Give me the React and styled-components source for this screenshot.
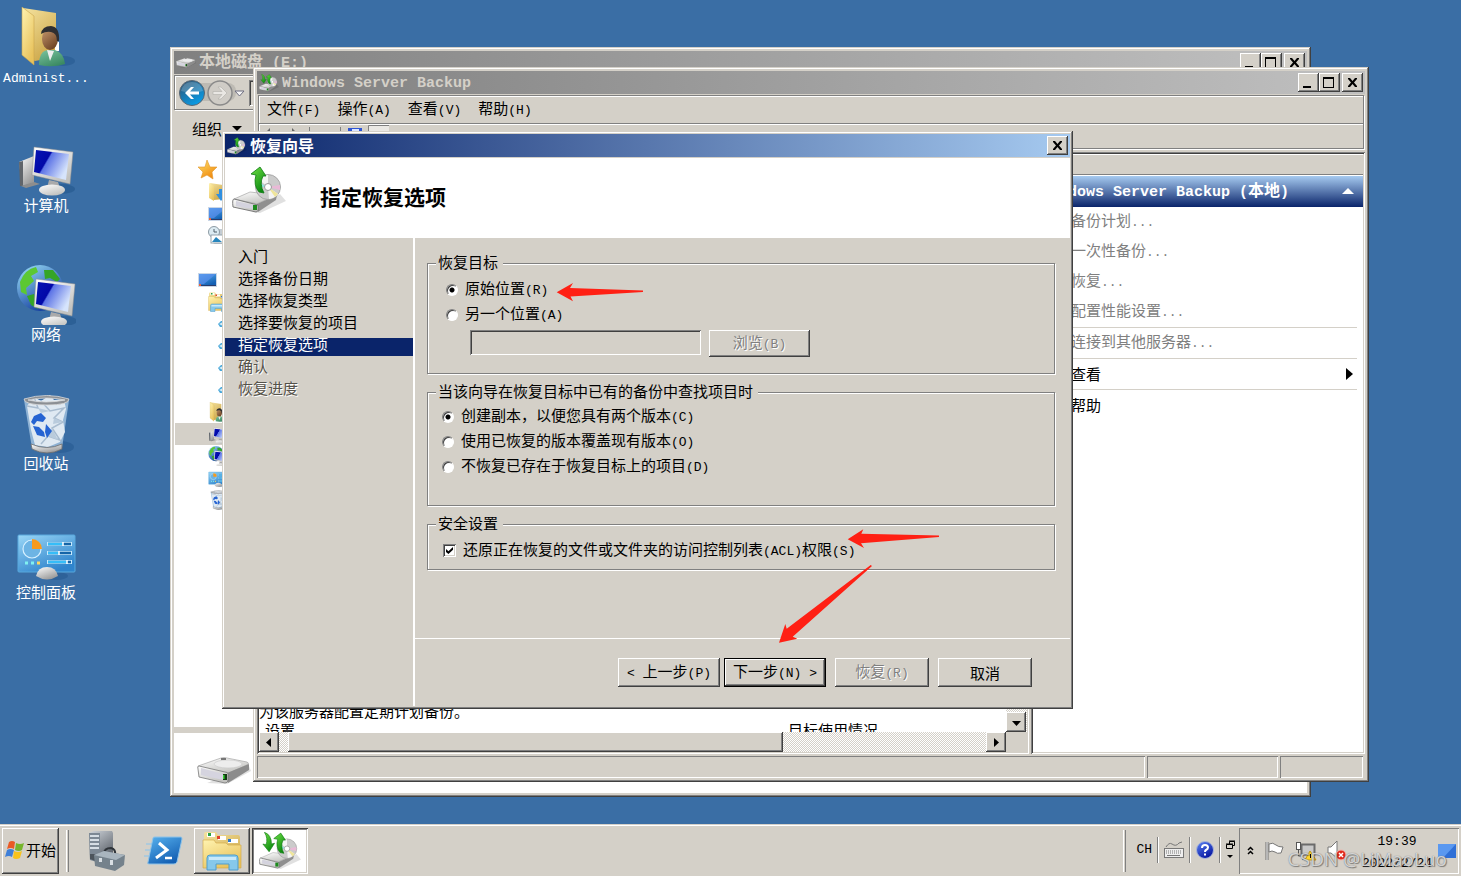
import React from "react";
import styled, { createGlobalStyle, css } from "styled-components";

const face = "#d4d0c8";
const navy = "#0a246a";
const sky = "#a6caf0";
const shade = "#808080";
const dark = "#404040";

const GlobalStyle = createGlobalStyle`
  * { box-sizing: border-box; }
  html, body, #root { height: 100%; }
  body { margin: 0; overflow: hidden; }
  body, button, input, a {
    font-family: "Noto Sans CJK SC", sans-serif;
    font-size: 15px;
    line-height: 18px;
    color: #000;
  }
  button { padding: 0; border: 0; background: none; white-space: nowrap; }
  svg { display: block; flex: none; }
`;

const raised = css`
  background: ${face};
  box-shadow: inset -1px -1px 0 ${dark}, inset 1px 1px 0 #fff, inset -2px -2px 0 ${shade};
`;
const sunken = css`
  padding: 2px;
  box-shadow: inset 1px 1px 0 ${shade}, inset -1px -1px 0 #fff, inset 2px 2px 0 ${dark}, inset -2px -2px 0 ${face};
`;
const etched = css`
  border: 1px solid ${shade};
  box-shadow: 1px 1px 0 #fff, inset 1px 1px 0 #fff;
`;
const dither = css`
  background: repeating-conic-gradient(#fff 0 25%, ${face} 0 50%) 0 0 / 2px 2px;
`;

/* ---------- text ---------- */

const Latin = styled.span`
  font-family: "Liberation Mono", monospace;
  font-size: ${(p) => (p.$large ? 15 : 13)}px;
  white-space: pre;
`;

function Mixed({ text, large }) {
  return text.split(/([\x20-\x7e]+)/).map((part, i) =>
    i % 2 ? <Latin key={i} $large={large}>{part}</Latin> : part
  );
}

/* ---------- drawings ---------- */

const DefsSvg = styled.svg`
  position: absolute;
`;

function Gradients() {
  const grads = {
    gFolder: ["#fff3b0", "#e8c25c"],
    gFolderDark: ["#f5e3a0", "#cda84a"],
    gMetal: ["#ffffff", "#9a9a9a"],
    gMetalDark: ["#cfd4da", "#5d636b"],
    gGreen: ["#6fe045", "#0c8a10"],
    gSky: ["#9ad7f7", "#2f84cc"],
    gBlue: ["#58b2ee", "#1460b4"],
    gOrb: ["#34506c", "#089be6"],
    gGlobe: ["#9fe4fb", "#103a9c"],
    gStar: ["#ffe36a", "#f08a10"],
    gSkin: ["#c89a70", "#6f4526"],
    gShirt: ["#7cc4a0", "#3b8a63"],
    gHelp: ["#5d86f5", "#0715a0"],
    gPale: ["#ffffff", "#c2c2bf"],
  };
  return (
    <DefsSvg width="0" height="0" aria-hidden="true">
      <defs>
        {Object.entries(grads).map(([id, [a, b]]) => (
          <linearGradient key={id} id={id} x1="0" y1="0" x2="0.6" y2="1">
            <stop offset="0" stopColor={a} />
            <stop offset="1" stopColor={b} />
          </linearGradient>
        ))}
        <linearGradient id="gScreen" x1="0" y1="0" x2="1" y2="0.5">
          <stop offset="0" stopColor="#0614b4" />
          <stop offset="0.42" stopColor="#0208a8" />
          <stop offset="0.46" stopColor="#5d74e6" />
          <stop offset="1" stopColor="#d6e4fc" />
        </linearGradient>
      </defs>
    </DefsSvg>
  );
}

const Draw = ({ w, h, box, children }) => (
  <svg width={w} height={h} viewBox={box} aria-hidden="true">{children}</svg>
);

const Monitor = () => (
  <g>
    <ellipse cx="45" cy="53" rx="14" ry="5" fill="#1d4f86" opacity="0.45" />
    <path d="M33 44 L42 46 L44 52 H31Z" fill="#aaa" />
    <ellipse cx="36" cy="54" rx="13" ry="5.500" fill="url(#gPale)" />
    <path d="M18 11 L57 16 L54 48 L16 39Z" fill="url(#gPale)" stroke="#8f8f8f" strokeWidth="0.500" />
    <path d="M20 14 L53 18 L50 44 L18 36Z" fill="url(#gScreen)" />
  </g>
);

const UserFolder = ({ s = 60 }) => (
  <Draw w={s} h={s} box="3 0 60 60">
    <ellipse cx="50" cy="54" rx="12" ry="5" fill="#1d4f86" opacity="0.4" />
    <path d="M10 1 L43 6 V50 L22 54 L10 48Z" fill="url(#gFolderDark)" />
    <path d="M42 34 L46 35 V44 L42 44Z" fill="#fff" />
    <path d="M9 0 L21 9 V58 L9 48Z" fill="url(#gFolder)" stroke="#c9a64e" strokeWidth="0.600" />
    <path d="M26 58 Q26 44 35 43 L42 43 Q51 46 52 57 Q40 61 26 58Z" fill="url(#gShirt)" />
    <path d="M34 43 L37 54 L41 44Z" fill="#eee" />
    <ellipse cx="37" cy="32" rx="8" ry="11" fill="url(#gSkin)" />
    <path d="M28 27 Q29 19 38 19 Q47 20 46 34 L44 34 Q44 26 38 25 Q33 24 28 27Z" fill="#2f2f31" />
  </Draw>
);

const Computer = ({ s = 60 }) => (
  <Draw w={s} h={s} box="0 0 60 60">
    <path d="M3 26 L18 20 V47 L6 50Z" fill="url(#gMetal)" />
    <path d="M3 26 L7 25 V50 L4 50Z" fill="#60656b" />
    <path d="M5 50 L18 46 L24 48 L10 52Z" fill="#8d8d8d" />
    <Monitor />
  </Draw>
);

const Network = ({ s = 60 }) => (
  <Draw w={s} h={s} box="0 0 60 60">
    <circle cx="24" cy="23" r="23" fill="url(#gGlobe)" />
    <path d="M4 17 Q9 4 20 2 L22 7 L15 11 L18 16 L10 23 L11 30 L5 27Z" fill="#5cc832" />
    <path d="M28 5 L37 5 L44 14 L41 17 L34 13 L29 14Z M11 31 L18 29 L22 44 L15 40Z" fill="#35a526" />
    <g transform="translate(2 3)"><Monitor /></g>
  </Draw>
);

const Bin = ({ s = 60 }) => (
  <Draw w={s} h={s} box="0 0 60 60">
    <ellipse cx="44" cy="53" rx="14" ry="6" fill="#1d4f86" opacity="0.4" />
    <path d="M8 6 H53 L46 54 Q31 62 16 54Z" fill="#9fc0dd" opacity="0.85" />
    <path d="M11 12 L18 3 L25 7 L34 1 L38 6 L48 5 L50 15 L47 26 L49 38 L44 48 L32 53 L19 51 L15 36Z" fill="#dfe9f2" />
    <path d="M18 3 L22 14 L11 12 M25 7 L34 17 L48 14 L38 24 L47 28 L36 34 L44 46 L32 42 L25 50" fill="none" stroke="#a9bccf" strokeWidth="1.500" />
    <path d="M22 14 L34 17 L25 19Z M38 24 L47 28 L37 30Z M36 34 L42 46 L32 42Z" fill="#b9cbdc" />
    <path d="M18 22 L25 19 L30 24 L27 28 L21 27 L18 31 L15 28Z M17 32 L21 41 L29 43 L28 38 L23 33Z M30 30 L36 37 L31 44 L29 38Z" fill="#2563d2" />
    <path d="M15 50 Q31 57 46 50 L46 55 Q31 63 16 55Z" fill="url(#gMetal)" stroke="#6c6c6c" strokeWidth="0.800" />
    <path d="M8 5 Q31 -2 53 5 Q53 11 31 11 Q8 11 8 5Z M12 6 Q30 10 49 6 Q31 2 12 6Z" fillRule="evenodd" fill="#8b8f94" stroke="#dcdcdc" strokeWidth="0.800" />
  </Draw>
);

const ControlPanel = ({ s = 60 }) => (
  <Draw w={s} h={s} box="0 0 60 60">
    <ellipse cx="40" cy="53" rx="12" ry="4" fill="#1d4f86" opacity="0.4" />
    <rect x="2" y="12" width="57" height="37" rx="1" fill="url(#gSky)" stroke="#58a8dc" />
    <circle cx="16" cy="26" r="9" fill="#6db4e4" stroke="#d6f0ff" strokeWidth="1.200" />
    <path d="M16 26 V16 A10 10 0 0 1 26 26Z" fill="#f79a1c" />
    <path d="M31 21 H56 M31 30 H56 M31 39 H56" stroke="#c8e9fb" strokeWidth="4" />
    <path d="M32 21 H55 M32 30 H55 M32 39 H55" stroke="#1565a8" strokeWidth="2.500" />
    <path d="M32 21 H47 M32 30 H43 M32 39 H51" stroke="#35bdf8" strokeWidth="2.500" />
    <path d="M47 19 v4 M43 28 v4 M51 37 v4" stroke="#fff" strokeWidth="1.500" />
    <path d="M9 40 h3 M15 40 h3" stroke="#80f0f0" strokeWidth="3" />
    <path d="M21 40 h3" stroke="#ffd75e" strokeWidth="3" />
    <path d="M20 53 Q22 44 31 44 Q40 44 42 53 Q31 60 20 53Z" fill="url(#gMetal)" />
  </Draw>
);

const Drive = ({ w, h }) => (
  <Draw w={w} h={h} box="0 0 54 28">
    <path d="M10 26 L30 27 L54 14 L52 9Z" fill="#000" opacity="0.12" />
    <path d="M1 9 L24 1 Q27 0 30 1 L50 5 Q53 6 50 8 L30 17 L2 12Z" fill="url(#gPale)" stroke="#9b9b9b" strokeWidth="0.600" />
    <ellipse cx="31" cy="7" rx="14" ry="4" fill="#ededed" stroke="#c8c8c8" strokeWidth="0.600" />
    <path d="M24 1 H29 V3 H24Z" fill="#777" />
    <path d="M30 16 L52 7 V13 L31 26Z" fill="#8c8c8c" />
    <path d="M2 9 Q0 9 1 12 L2 20 L28 26 Q31 26 31 23 L31 17 Q31 15 28 15Z" fill="url(#gPale)" stroke="#777" strokeWidth="0.800" />
    <path d="M4 11 L26 17 V23 L4 18Z" fill="#d5d4df" />
    <rect x="26" y="17" width="4" height="6" fill="#123d12" />
    <rect x="26" y="18" width="1.500" height="4" fill="#39d135" />
  </Draw>
);

const BackupIcon = ({ w, h, both }) => (
  <Draw w={w} h={h} box="0 0 54 48">
    <path d="M20 46 L28 47 L54 35 L48 28Z" fill="#000" opacity="0.12" />
    <path d="M2 33 L18 26 L44 29 L25 38Z" fill="url(#gPale)" stroke="#999" strokeWidth="0.600" />
    <path d="M25 38 L45 29 L44 34 L26 46Z" fill="#8f8f8f" />
    <path d="M2 33 Q0 33 1 41 L24 46 Q27 46 26 39Z" fill="url(#gPale)" stroke="#6f6f6f" strokeWidth="0.900" />
    <path d="M4 35 L21 39 V43 L4 40Z" fill="#d4d3de" />
    <rect x="21" y="39" width="4" height="5" fill="#1d8a1d" />
    <circle cx="36" cy="21" r="12.500" fill="#cbcbcb" stroke="#9a9a9a" strokeWidth="0.800" />
    <path d="M36 21 L26 13 A12 12 0 0 1 36 9Z M36 21 L46 28 A12 12 0 0 1 37 33Z" fill="#f4f4f4" />
    <path d="M36 21 L48 19 L48 24Z" fill="#e9b9d6" />
    <path d="M36 21 L46 28 L43 31Z" fill="#efe59a" />
    <path d="M36 21 L24 21 L26 16Z" fill="#96e0e0" />
    <circle cx="36" cy="21" r="3.500" fill="#fff" stroke="#9a9a9a" />
    <path d="M28 1 L34 10 L31 10 Q27 18 32 27 L27 26 Q21 19 24 9 L19 8Z" fill="url(#gGreen)" stroke="#0d7a12" strokeWidth="0.800" />
    {both && <path d="M7 0 Q16 3 16 15 L20 14 L13 25 L5 15 L9 16 Q12 8 7 0Z" fill="url(#gGreen)" stroke="#0d7a12" strokeWidth="0.800" />}
  </Draw>
);

const Star = () => (
  <Draw w={20} h={20} box="0 0 20 20">
    <path d="M9 0 L12 7 L19 7 L14 12 L15 19 L9 15 L3 18 L5 12 L0 7 L7 7Z" fill="url(#gStar)" stroke="#e0962c" strokeWidth="0.600" />
  </Draw>
);

const Download = () => (
  <Draw w={20} h={20} box="0 0 20 20">
    <path d="M2 1 L15 3 V17 L6 18Z" fill="url(#gFolderDark)" />
    <path d="M1 1 L6 4 V19 L1 16Z" fill="url(#gFolder)" />
    <path d="M11 7 H16 V12 H19 L13 19 L8 12 H11Z" fill="#2f8fe0" />
  </Draw>
);

const DeskMini = () => (
  <Draw w={20} h={16} box="0 0 20 16">
    <rect x="0" y="1" width="19" height="14" fill="#c9d6e6" />
    <rect x="1" y="2" width="17" height="11" fill="url(#gBlue)" />
    <path d="M1 2 H18 L6 12 H1Z" fill="#5c90ee" opacity="0.7" />
    <path d="M1 13.500 H18" stroke="#2a3c6b" />
    <rect x="1" y="12" width="2" height="2" fill="#e8643c" />
  </Draw>
);

const Recent = () => (
  <Draw w={20} h={20} box="0 0 20 20">
    <rect x="5" y="3" width="14" height="15" rx="2" fill="#c4ccd2" />
    <circle cx="6" cy="6" r="5.500" fill="#dcebf2" stroke="#8c9aa3" />
    <path d="M6 3 V6 H9" stroke="#50606a" fill="none" />
    <rect x="3" y="9" width="12" height="8" fill="#fff" stroke="#93a3ad" />
    <path d="M4 16 L8 11 L14 16Z" fill="#2786bd" />
  </Draw>
);

const Library = ({ s = 20 }) => (
  <Draw w={s} h={s} box="0 0 40 40">
    <path d="M2 3 Q2 1 4 1 H14 L16 4 H36 Q38 4 38 7 V36 H2Z" fill="url(#gFolderDark)" />
    <path d="M5 2 H13 V6 H5Z M16 5 H24 V9 H16Z M26 8 H36 V12 H26Z" fill="#fff" />
    <path d="M6 2 h3 v3 h-3Z" fill="#28a145" />
    <path d="M15 5 h3 v3 h-3Z" fill="#e2402c" />
    <path d="M26 8 h3 v3 h-3Z" fill="#2a78d0" />
    <path d="M1 9 H12 L14 12 H24 L26 14 H39 V37 H1Z" fill="url(#gFolder)" stroke="#d1a542" strokeWidth="0.600" />
    <path d="M5 39 V27 Q5 24 8 24 H33 Q36 24 36 27 V39 H27 V33 H14 V39Z" fill="#86c8ea" stroke="#4f9dcc" />
    <path d="M7 26 H34 V29 H7Z" fill="#c9e9fa" />
  </Draw>
);

const LibItem = () => (
  <Draw w={12} h={12} box="0 0 12 12">
    <path d="M0 6 L3 3 L10 3 V9 L2 9Z" fill="#4aa8da" />
    <path d="M1 6 L4 4.500 V7.500Z" fill="#d5effa" />
  </Draw>
);

const BackOrb = () => (
  <Draw w={76} h={28} box="0 0 76 28">
    <rect x="8" y="4" width="50" height="18" rx="8" fill="#bdbab3" />
    <circle cx="14" cy="14" r="12.500" fill="url(#gOrb)" stroke="#5a6672" />
    <path d="M3 12 Q5 3 14 3 Q23 3 25 12 Q14 15 3 12Z" fill="#fff" opacity="0.2" />
    <path d="M7 14 L13 8 H16 L12 12.500 H21 V15.500 H12 L16 20 H13Z" fill="#fff" />
    <circle cx="42" cy="14" r="12" fill="#cfccc6" stroke="#8a8a8a" strokeWidth="1.500" />
    <path d="M49 14 L43 8 H40 L44 12.500 H35 V15.500 H44 L40 20 H43Z" fill="#e9e7e3" stroke="#b0aeaa" strokeWidth="0.600" />
    <path d="M57 12 H66 L61.500 17Z" fill="#f5f5f5" stroke="#6d6d80" />
  </Draw>
);

const WinFlag = () => (
  <Draw w={20} h={20} box="0 0 20 20">
    <path d="M4 2 Q7 0 10 2 L9 9 Q6 7 2 9Z" fill="#ea5a24" />
    <path d="M11 3 Q15 5 19 3 L17 10 Q14 12 10 10Z" fill="#76b52c" />
    <path d="M2 10 Q5 8 9 10 L7 17 Q4 15 0 17Z" fill="#3f7fd8" />
    <path d="M9 11 Q13 13 17 11 L15 18 Q11 20 8 18Z" fill="#f8c21c" />
  </Draw>
);

const ServerManager = () => (
  <Draw w={40} h={42} box="0 0 40 42">
    <path d="M3 3 L8 1 H26 L27 3 V30 H4Z" fill="url(#gMetalDark)" />
    <path d="M3 3 H14 V33 L4 30Z" fill="#7c8894" />
    <path d="M4 6 H13 M4 10 H13 M4 14 H13 M4 18 H13" stroke="#d5dde4" strokeWidth="2" />
    <path d="M4 24 H12 V32 L4 29Z" fill="#4c545c" />
    <path d="M18 24 Q18 18 25 18 Q30 19 29 25" fill="none" stroke="#2f3439" strokeWidth="2" />
    <path d="M8 25 L18 21 L39 25 L38 35 L29 41 L9 36Z" fill="#75828c" />
    <path d="M8 25 L18 21 L39 25 L30 30Z" fill="#a9b5be" />
    <path d="M13 28 h3 v4 h-3Z M24 30 h3 v5 h-3Z" fill="#d9dfe4" />
  </Draw>
);

const PowerShell = () => (
  <Draw w={40} h={30} box="0 0 40 30">
    <path d="M2 8 H9 M1 14 H8 M0 20 H7" stroke="#9fc8e4" strokeWidth="2" opacity="0.7" />
    <path d="M9 2 Q9 1 11 1 H37 Q38 1 38 3 L33 26 Q32 28 30 28 H5 Q3 28 4 26Z" fill="url(#gBlue)" stroke="#8fc3e8" />
    <path d="M15 7 L23 14 L12 22" fill="none" stroke="#fff" strokeWidth="3" />
    <path d="M21 22 H28" stroke="#fff" strokeWidth="2.500" />
  </Draw>
);

const Keyboard = () => (
  <Draw w={20} h={18} box="0 0 20 18">
    <path d="M2 6 Q5 1 8 3 Q12 6 15 2 L18 1" fill="none" stroke="#777" />
    <rect x="0.500" y="7.500" width="19" height="9" fill="#eee" stroke="#777" />
    <path d="M2 10 H18 M2 12 H18" stroke="#777" strokeDasharray="1 1" />
    <path d="M3 14.500 H16" stroke="#777" />
  </Draw>
);

const HelpOrb = () => (
  <Draw w={18} h={18} box="0 0 18 18">
    <circle cx="9" cy="9" r="8.500" fill="url(#gHelp)" stroke="#a9b4d8" />
    <path d="M6 7 Q6 4 9 4 Q12 4 12 6.500 Q12 8 10 9 Q9 9.500 9 11" fill="none" stroke="#fff" strokeWidth="2" />
    <rect x="8" y="12.500" width="2" height="2" fill="#fff" />
  </Draw>
);

const Options = () => (
  <Draw w={10} h={20} box="0 0 10 20">
    <path d="M3.500 4 V1.500 H8.500 V5.500 H7 M3 1 H9" fill="none" stroke="#000" />
    <path d="M0.500 4.500 H6.500 V8.500 H0.500Z M0 4 H7" fill={face} stroke="#000" />
    <path d="M1 15 H7 L4 18Z" fill="#000" />
  </Draw>
);

const Chevrons = () => (
  <Draw w={8} h={10} box="0 0 8 10">
    <path d="M1 4 L3.500 1.500 L6 4 M1 8 L3.500 5.500 L6 8" fill="none" stroke="#000" strokeWidth="1.500" />
  </Draw>
);

const Flag = () => (
  <Draw w={20} h={20} box="0 0 20 20">
    <path d="M2 1 V19" stroke="#6e6e6e" strokeWidth="3" />
    <path d="M2 1 V19" stroke="#fff" />
    <path d="M4 3 Q8 1 11 4 Q13 6 18 6 L16 12 Q12 13 10 11 Q7 9 4 11Z" fill="#fff" stroke="#777" />
  </Draw>
);

const NetTray = () => (
  <Draw w={22} h={20} box="0 0 22 20">
    <rect x="6.500" y="3.500" width="13" height="10" fill="#c9c9c9" stroke="#6b6b6b" strokeWidth="2" />
    <path d="M7 18 H16" stroke="#777" strokeWidth="2" />
    <rect x="1.500" y="1.500" width="4" height="7" fill="#fff" stroke="#555" />
    <path d="M3.500 9 V15 H8" fill="none" stroke="#555" />
    <path d="M15 10 L21 19 H10Z" fill="#ffd52e" stroke="#c49a10" />
    <path d="M15.500 13 V17" stroke="#000" />
  </Draw>
);

const Speaker = () => (
  <Draw w={20} h={22} box="0 0 20 22">
    <path d="M1 7 H4 L10 1 V18 L4 13 H1Z" fill="#fff" stroke="#777" />
    <circle cx="14" cy="15" r="5" fill="#e02a1c" stroke="#f6b5ae" />
    <path d="M12 13 L16 17 M16 13 L12 17" stroke="#fff" strokeWidth="1.500" />
  </Draw>
);

const ShowDesk = () => (
  <Draw w={18} h={15} box="0 0 18 15">
    <rect width="18" height="14" fill="#2f6fd6" />
    <path d="M0 0 H18 L5 14 H0Z" fill="#5a98f0" />
  </Draw>
);

const glyphs = {
  min: <path d="M5 13 H13 V15 H5Z" />,
  max: <path d="M4 4 H15 V15 H4Z M5 6 V14 H14 V6Z" fillRule="evenodd" />,
  close: <path d="M6 5 H8 L10.500 8 L13 5 H15 V6 L12 9.500 L15 13 V14 H13 L10.500 11 L8 14 H6 V13 L9 9.500 L6 6Z" />,
  left: <path d="M12 5 V14 L7 9.500Z" />,
  right: <path d="M8 5 V14 L13 9.500Z" />,
  down: <path d="M6 8 H15 L10.500 13Z" />,
};
const Glyph = ({ name }) => <Draw w={21} h={19} box="0 0 21 19">{glyphs[name]}</Draw>;

/* ---------- desktop ---------- */

const Screen = styled.div`
  position: relative;
  height: 100%;
  min-height: 100vh;
  display: flex;
  flex-direction: column;
  overflow: hidden;
  background: #3a6ea5;
`;
const Desktop = styled.main`
  position: relative;
  flex: 1;
  padding-top: 7px;
`;
const Shortcuts = styled.nav`
  width: 92px;
`;
const Shortcut = styled.button`
  width: 100%;
  height: 129px;
  display: flex;
  flex-direction: column;
  align-items: center;
  color: #fff;
`;

const Window = styled.section`
  position: absolute;
  left: ${(p) => p.$x}px;
  top: ${(p) => p.$y}px;
  width: ${(p) => p.$w}px;
  height: ${(p) => p.$h}px;
  padding: ${(p) => p.$pad || 4}px;
  display: flex;
  flex-direction: column;
  background: ${face};
  box-shadow: inset -1px -1px 0 ${dark}, inset 1px 1px 0 ${face}, inset -2px -2px 0 ${shade}, inset 2px 2px 0 #fff;
`;
const TitleRow = styled.header`
  flex: none;
  height: 23px;
  margin-bottom: 1px;
  padding: 0 2px;
  display: flex;
  align-items: center;
  gap: 3px;
  font-weight: 700;
  font-size: 16px;
  color: ${(p) => (p.$active ? "#fff" : face)};
  background: linear-gradient(90deg, ${(p) => (p.$active ? `${navy}, ${sky}` : `${shade}, #c0c0c0`)});
`;
const TitleText = styled.span`
  flex: 1;
  padding-bottom: 2px;
  white-space: nowrap;
`;
const Controls = styled.div`
  display: flex;
`;
const ControlButton = styled.button`
  ${raised}
  width: 21px;
  height: 19px;
  margin-left: ${(p) => (p.$apart ? 2 : 0)}px;
`;

function TitleBar({ icon, title, active, buttons }) {
  return (
    <TitleRow $active={active}>
      {icon}
      <TitleText><Mixed text={title} large /></TitleText>
      <Controls>
        {buttons.map((b) => (
          <ControlButton key={b} aria-label={b} $apart={b === "close"}><Glyph name={b} /></ControlButton>
        ))}
      </Controls>
    </TitleRow>
  );
}

/* ---------- explorer window ---------- */

const AddressBar = styled.div`
  ${etched}
  flex: none;
  height: 35px;
  margin-right: 1px;
  padding: 0 3px;
  display: flex;
  align-items: center;
`;
const NavButton = styled.button`
  width: 71px;
  overflow: hidden;
`;
const AddressField = styled.input`
  ${sunken}
  flex: 1;
  height: 26px;
  border: 0;
  background: ${face};
`;
const CommandBar = styled.div`
  flex: none;
  height: 40px;
  padding: 0 0 3px 18px;
  display: flex;
  align-items: center;
`;
const MenuArrow = styled.span`
  margin-left: 10px;
  border: 5px solid transparent;
  border-top-color: #000;
  border-bottom: 0;
`;
const Tree = styled.ul`
  flex: 1;
  margin: 0;
  padding: 9px 0 0 1px;
  list-style: none;
  background: #fff;
`;
const TreeRow = styled.li`
  height: 22px;
  padding-left: ${(p) => 23 + p.$level * 10}px;
  display: flex;
  align-items: center;
  background: ${(p) => (p.$selected ? face : "none")};
`;
const Details = styled.div`
  flex: none;
  height: 60px;
  margin-top: 6px;
  padding: 24px 0 0 23px;
  background: #fff;
`;

const treeRows = [
  [0, <Star />], [1, <Download />], [1, <DeskMini />], [1, <Recent />], [0, null],
  [0, <DeskMini />], [1, <Library />], [2, <LibItem />], [2, <LibItem />], [2, <LibItem />], [2, <LibItem />],
  [1, <UserFolder s={20} />], [1, <Computer s={20} />, true], [1, <Network s={20} />],
  [1, <ControlPanel s={20} />], [1, <Bin s={20} />],
];

function Explorer() {
  return (
    <Window $x={170} $y={47} $w={1141} $h={750}>
      <TitleBar icon={<Drive w={20} h={12} />} title="本地磁盘 (E:)" buttons={["min", "max", "close"]} />
      <AddressBar>
        <NavButton aria-label="后退"><BackOrb /></NavButton>
        <AddressField aria-label="地址" />
      </AddressBar>
      <CommandBar><button>组织</button><MenuArrow /></CommandBar>
      <Tree>
        {treeRows.map(([level, icon, selected], i) => (
          <TreeRow key={i} $level={level} $selected={selected}>{icon}</TreeRow>
        ))}
      </Tree>
      <Details><Drive w={54} h={28} /></Details>
    </Window>
  );
}

/* ---------- backup console ---------- */

const Rebar = styled.div`
  ${etched}
  flex: none;
  margin: 0 1px;
`;
const MenuBar = styled.nav`
  height: 27px;
  padding-left: 8px;
  display: flex;
  align-items: center;
  gap: 17px;
`;
const ToolBar = styled.div`
  height: 25px;
  padding: 1px 6px 0;
  display: flex;
  align-items: flex-start;
  border-top: 1px solid ${shade};
  box-shadow: inset 0 1px 0 #fff;
`;
const Panes = styled.div`
  flex: 1;
  margin-top: 3px;
  min-height: 0;
  display: flex;
  gap: 2px;
`;
const ScrollPane = styled.div`
  ${sunken}
  flex: 1;
  min-width: 0;
  display: grid;
  grid-template: minmax(0, 1fr) 20px / minmax(0, 1fr) 21px;
`;
const ScrollContent = styled.div`
  display: flex;
  flex-direction: column;
  justify-content: flex-end;
  overflow: hidden;
  background: #fff;
`;
const ContentLine = styled.div`
  height: 20px;
  line-height: 16px;
  white-space: nowrap;
`;
const ColumnHeads = styled.div`
  height: 9px;
  padding-left: 6px;
  display: grid;
  grid-template-columns: 523px 1fr;
  line-height: 14px;
`;
const VerticalTrack = styled.div`
  ${dither}
  display: flex;
  align-items: flex-end;
`;
const HorizontalTrack = styled.div`
  ${dither}
  display: flex;
`;
const Thumb = styled.div`
  ${raised}
  width: 495px;
  margin: 0 auto 0 9px;
`;
const ScrollButton = styled.button`
  ${raised}
  width: 20px;
  height: 20px;
  overflow: hidden;
`;
const ActionPane = styled.aside`
  ${sunken}
  width: 334px;
  display: flex;
  flex-direction: column;
  background: #fff;
`;
const ActionCaption = styled.div`
  height: 22px;
  background: ${face};
  box-shadow: inset 0 1px 0 #fff, inset 0 -1px 0 #fff, inset 0 -2px 0 ${shade};
`;
const ActionTitle = styled.h2`
  height: 31px;
  margin: 0;
  padding: 0 9px 1px 8px;
  display: flex;
  align-items: center;
  justify-content: space-between;
  font-size: 16px;
  color: #fff;
  background: linear-gradient(${sky}, ${navy});
`;
const ActionGroup = styled.div`
  margin-right: 6px;
  & + & { border-top: 1px solid ${face}; }
`;
const Action = styled.button`
  width: 100%;
  height: 30px;
  padding: 0 4px 1px 38px;
  display: flex;
  align-items: center;
  justify-content: space-between;
  color: ${(p) => (p.disabled ? shade : "#000")};
`;
const StatusBar = styled.footer`
  flex: none;
  height: 22px;
  margin-top: 2px;
  padding-right: 2px;
  display: grid;
  grid-template-columns: 1fr 131px 83px;
  gap: 2px;
`;
const StatusCell = styled.div`
  box-shadow: inset 1px 1px 0 ${shade}, inset -1px -1px 0 #fff;
`;

const actionGroups = [
  ["备份计划...", "一次性备份...", "恢复...", "配置性能设置..."],
  ["连接到其他服务器..."],
  ["查看"],
  ["帮助"],
];

function BackupConsole() {
  return (
    <Window $x={253} $y={67} $w={1116} $h={715}>
      <TitleBar icon={<BackupIcon w={20} h={18} both />} title="Windows Server Backup" buttons={["min", "max", "close"]} />
      <Rebar>
        <MenuBar>
          {["文件(F)", "操作(A)", "查看(V)", "帮助(H)"].map((m) => <button key={m}><Mixed text={m} /></button>)}
        </MenuBar>
        <ToolBar>
          <Draw w={130} h={22} box="0 0 130 22">
            <path d="M0 8 L5 3 V13Z M32 8 L27 3 V13Z" fill="#666" />
            <path d="M44.500 2 V20 M75.500 2 V20" stroke={shade} />
            <rect x="83" y="3" width="14" height="14" fill="#2f55d4" />
            <rect x="87" y="4" width="7" height="6" fill="#dbe6ff" />
            <path d="M103 20 V1 H124 V20Z" fill="#eae8e4" />
            <path d="M103.500 20 V0.500 H124" fill="none" stroke={shade} />
          </Draw>
        </ToolBar>
      </Rebar>
      <Panes>
        <ScrollPane>
          <ScrollContent>
            <ContentLine>为该服务器配置定期计划备份。</ContentLine>
            <ColumnHeads><span>设置</span><span>目标使用情况</span></ColumnHeads>
          </ScrollContent>
          <VerticalTrack><ScrollButton aria-label="向下"><Glyph name="down" /></ScrollButton></VerticalTrack>
          <HorizontalTrack>
            <ScrollButton aria-label="向左"><Glyph name="left" /></ScrollButton>
            <Thumb />
            <ScrollButton aria-label="向右"><Glyph name="right" /></ScrollButton>
          </HorizontalTrack>
        </ScrollPane>
        <ActionPane>
          <ActionCaption />
          <ActionTitle>
            <span><Mixed text="Windows Server Backup (本地)" large /></span>
            <Draw w={12} h={6} box="0 0 12 6"><path d="M6 0 L12 6 H0Z" fill="#fff" /></Draw>
          </ActionTitle>
          {actionGroups.map((group, g) => (
            <ActionGroup key={g}>
              {group.map((text) => (
                <Action key={text} disabled={g < 2}>
                  <span><Mixed text={text} /></span>
                  {text === "查看" && <Draw w={7} h={12} box="0 0 7 12"><path d="M0 0 L7 6 L0 12Z" /></Draw>}
                </Action>
              ))}
            </ActionGroup>
          ))}
        </ActionPane>
      </Panes>
      <StatusBar><StatusCell /><StatusCell /><StatusCell /></StatusBar>
    </Window>
  );
}

/* ---------- recovery wizard ---------- */

const WizardHeader = styled.div`
  flex: none;
  height: 80px;
  padding: 0 7px 16px;
  display: flex;
  align-items: center;
  gap: 34px;
  background: #fff;
`;
const WizardTitle = styled.h1`
  margin: 0;
  padding-top: 12px;
  font-size: 21px;
  line-height: 24px;
`;
const WizardBody = styled.div`
  flex: 1;
  display: flex;
`;
const Steps = styled.ol`
  width: 190px;
  margin: 0;
  padding: 12px 0 0;
  list-style: none;
  border-right: 2px solid #fff;
`;
const Step = styled.li`
  height: 18px;
  margin-bottom: 4px;
  padding-left: 13px;
  line-height: 12px;
  color: ${(p) => (p.$state === "current" ? "#fff" : p.$state === "later" ? "#55524a" : "#000")};
  background: ${(p) => (p.$state === "current" ? navy : "none")};
  text-shadow: ${(p) => (p.$state === "later" ? "1px 1px 0 #fff" : "none")};
`;
const WizardMain = styled.form`
  flex: 1;
  display: flex;
  flex-direction: column;
`;
const Groups = styled.div`
  flex: 1;
  padding: 17px 15px 0 12px;
  display: flex;
  flex-direction: column;
  gap: 10px;
`;
const Group = styled.fieldset`
  ${etched}
  min-width: 0;
  height: ${(p) => p.$height}px;
  margin: 0;
  padding: ${(p) => p.$top}px 0 0 ${(p) => p.$indent}px;
`;
const Legend = styled.legend`
  height: 17px;
  margin-left: ${(p) => -p.$indent + 8}px;
  padding: 0 5px 0 2px;
  line-height: 13px;
  background: ${face};
`;
const Option = styled.label`
  height: 25px;
  display: flex;
  align-items: center;
  gap: 7px;
`;
const Radio = styled.input`
  appearance: none;
  flex: none;
  width: 12px;
  height: 12px;
  margin: 0;
  border: 1px solid;
  border-color: ${shade} #fff #fff ${shade};
  border-radius: 50%;
  background: #fff;
  box-shadow: inset 1px 1px 0 ${dark};
  &:checked { background: radial-gradient(circle, #000 0 2px, #fff 3px); }
`;
const Check = styled.input`
  appearance: none;
  flex: none;
  width: 13px;
  height: 13px;
  margin: 0;
  background: #fff;
  box-shadow: inset 1px 1px 0 ${shade}, inset -1px -1px 0 #fff, inset 2px 2px 0 ${dark}, inset -2px -2px 0 ${face};
  &:checked::before {
    content: "";
    display: block;
    width: 7px;
    height: 7px;
    margin: 3px;
    background: #000;
    clip-path: polygon(0 30%, 35% 60%, 100% 0, 100% 40%, 35% 100%, 0 70%);
  }
`;
const PathRow = styled.div`
  padding: 3px 0 0 24px;
  display: flex;
  gap: 8px;
`;
const PathInput = styled.input`
  ${sunken}
  width: 231px;
  height: 25px;
  border: 0;
  background: ${face};
`;
const Button = styled.button`
  ${raised}
  width: ${(p) => p.$width}px;
  height: ${(p) => p.$height || 29}px;
  ${(p) => p.$default && css`
    border: 1px solid #000;
  `}
  &:disabled { color: ${shade}; text-shadow: 1px 1px 0 #fff; }
`;
const WizardFooter = styled.div`
  height: 68px;
  padding: 19px 38px 0 0;
  display: flex;
  justify-content: flex-end;
  gap: 9px;
  border-top: 1px solid #fff;
`;
const Pair = styled.div`
  display: flex;
  gap: 4px;
`;

const steps = [
  ["入门"], ["选择备份日期"], ["选择恢复类型"], ["选择要恢复的项目"],
  ["指定恢复选项", "current"], ["确认", "later"], ["恢复进度", "later"],
];

function RadioOption({ name, text, checked }) {
  return (
    <Option><Radio type="radio" name={name} defaultChecked={checked} /><span><Mixed text={text} /></span></Option>
  );
}

function Wizard() {
  return (
    <Window $x={222} $y={131} $w={851} $h={578} $pad={3}>
      <TitleBar icon={<BackupIcon w={20} h={18} />} title="恢复向导" active buttons={["close"]} />
      <WizardHeader>
        <BackupIcon w={54} h={48} />
        <WizardTitle>指定恢复选项</WizardTitle>
      </WizardHeader>
      <WizardBody>
        <Steps>
          {steps.map(([text, state]) => <Step key={text} $state={state}>{text}</Step>)}
        </Steps>
        <WizardMain onSubmit={(e) => e.preventDefault()}>
          <Groups>
            <Group $height={119} $indent={18} $top={5}>
              <Legend $indent={18}>恢复目标</Legend>
              <RadioOption name="target" text="原始位置(R)" checked />
              <RadioOption name="target" text="另一个位置(A)" />
              <PathRow>
                <PathInput aria-label="另一个位置" disabled />
                <Button type="button" $width={101} $height={27} disabled><Mixed text="浏览(B)" /></Button>
              </PathRow>
            </Group>
            <Group $height={122} $indent={14} $top={3}>
              <Legend $indent={14}>当该向导在恢复目标中已有的备份中查找项目时</Legend>
              <RadioOption name="conflict" text="创建副本，以便您具有两个版本(C)" checked />
              <RadioOption name="conflict" text="使用已恢复的版本覆盖现有版本(O)" />
              <RadioOption name="conflict" text="不恢复已存在于恢复目标上的项目(D)" />
            </Group>
            <Group $height={54} $indent={15} $top={5}>
              <Legend $indent={15}>安全设置</Legend>
              <Option>
                <Check type="checkbox" defaultChecked />
                <span><Mixed text="还原正在恢复的文件或文件夹的访问控制列表(ACL)权限(S)" /></span>
              </Option>
            </Group>
          </Groups>
          <WizardFooter>
            <Pair>
              <Button type="button" $width={102}><Mixed text="< 上一步(P)" /></Button>
              <Button type="submit" $width={102} $default><Mixed text="下一步(N) >" /></Button>
            </Pair>
            <Button type="button" $width={94} disabled><Mixed text="恢复(R)" /></Button>
            <Button type="button" $width={94}>取消</Button>
          </WizardFooter>
        </WizardMain>
      </WizardBody>
    </Window>
  );
}

/* ---------- red marker arrows ---------- */

const Markers = styled.svg`
  position: absolute;
  left: 550px;
  top: 275px;
  pointer-events: none;
`;

/* ---------- taskbar ---------- */

const TaskBar = styled.footer`
  flex: none;
  height: 52px;
  padding: 4px 2px 2px;
  display: flex;
  align-items: stretch;
  background: ${face};
  box-shadow: inset 0 1px 0 ${face}, inset 0 2px 0 #fff;
`;
const StartButton = styled.button`
  ${raised}
  width: 57px;
  padding-bottom: 3px;
  display: flex;
  align-items: center;
  justify-content: center;
  gap: 1px;
`;
const Grip = styled.span`
  width: 3px;
  margin: 2px 7px;
  border-left: 1px solid #fff;
  border-right: 1px solid ${shade};
`;
const QuickLaunch = styled.div`
  flex: 1;
  padding-left: 2px;
  display: flex;
  align-items: stretch;
  gap: 2px;
`;
const TaskButton = styled.button`
  width: 56px;
  display: flex;
  align-items: center;
  justify-content: center;
  ${(p) => p.$look === "raised" && raised}
  ${(p) => p.$look === "pressed" && css`
    background: #fff;
    box-shadow: inset 1px 1px 0 ${dark}, inset -1px -1px 0 #fff, inset 2px 2px 0 ${shade}, inset -2px -2px 0 ${face};
  `}
`;
const Language = styled.div`
  padding: 0 0 3px 3px;
  display: flex;
  align-items: center;
`;
const Divider = styled.span`
  width: 2px;
  height: 26px;
  margin: 0 5px;
  border-left: 1px solid ${shade};
  border-right: 1px solid #fff;
`;
const Tray = styled.div`
  width: 220px;
  margin-left: 3px;
  padding: 0 3px 0 8px;
  display: flex;
  align-items: center;
  box-shadow: inset 1px 1px 0 ${shade}, inset -1px -1px 0 #fff;
`;
const TrayIcons = styled.div`
  flex: 1;
  display: flex;
  align-items: center;
  gap: 10px;
`;
const Clock = styled.time`
  width: 82px;
  text-align: center;
  line-height: 19px;
`;
const Watermark = styled.div`
  position: absolute;
  right: 14px;
  bottom: 7px;
  font-family: "Open Sans", sans-serif;
  font-size: 19px;
  line-height: 20px;
  color: rgba(255, 255, 255, 0.7);
  text-shadow: 0 0 1px #666, 1px 1px 1px rgba(70, 70, 70, 0.6);
  pointer-events: none;
`;

const shortcuts = [
  ["Administ...", <UserFolder />],
  ["计算机", <Computer />],
  ["网络", <Network />],
  ["回收站", <Bin />],
  ["控制面板", <ControlPanel />],
];

export default function App() {
  return (
    <Screen>
      <GlobalStyle />
      <Gradients />
      <Desktop>
        <Shortcuts>
          {shortcuts.map(([label, icon]) => (
            <Shortcut key={label}>{icon}<span><Mixed text={label} /></span></Shortcut>
          ))}
        </Shortcuts>
        <Explorer />
        <BackupConsole />
        <Wizard />
        <Markers width="400" height="380" viewBox="550 275 400 380" fill="#ff2014" aria-hidden="true">
          <path d="M556.700 292.300 L573 283 L570 288 L643 290.500 V292 L570.500 296.600 L573 301.300Z" />
          <path d="M847.700 539.300 L863.300 529.300 L861.300 533.700 L939 535.500 V537 L861 543.300 L864 548Z" />
          <path d="M779 642.700 L785.300 624 L786.700 628.700 L870.700 565 L872 566 L792.700 636.700 L797.300 638.700Z" />
        </Markers>
      </Desktop>
      <TaskBar>
        <StartButton><WinFlag />开始</StartButton>
        <Grip />
        <QuickLaunch>
          <TaskButton aria-label="服务器管理器"><ServerManager /></TaskButton>
          <TaskButton aria-label="PowerShell"><PowerShell /></TaskButton>
          <TaskButton aria-label="资源管理器" $look="raised"><Library s={40} /></TaskButton>
          <TaskButton aria-label="备份" $look="pressed"><BackupIcon w={42} h={38} both /></TaskButton>
        </QuickLaunch>
        <Grip />
        <Language>
          <Latin>CH</Latin>
          <Divider />
          <Keyboard />
          <Divider />
          <HelpOrb />
          <Divider />
          <Options />
        </Language>
        <Tray>
          <TrayIcons><Chevrons /><Flag /><NetTray /><Speaker /></TrayIcons>
          <Clock><Latin>19:39</Latin><br /><Latin>2022/2/24</Latin></Clock>
          <ShowDesk />
        </Tray>
      </TaskBar>
      <Watermark>CSDN @LiMaoLuo</Watermark>
    </Screen>
  );
}
